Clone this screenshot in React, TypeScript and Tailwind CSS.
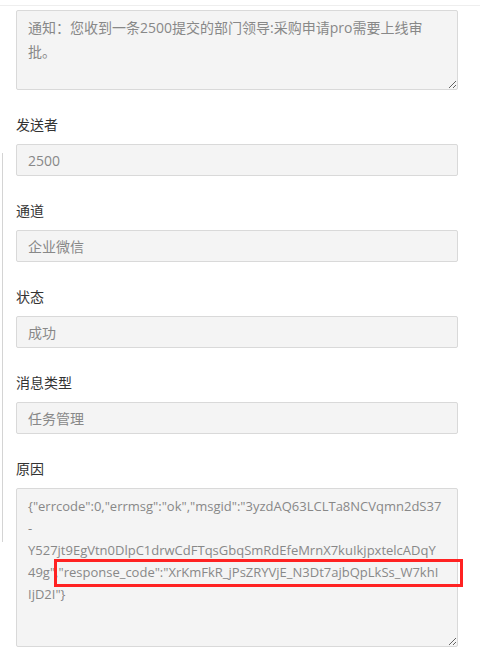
const font = "font-['Open_Sans','Noto_Sans_CJK_SC',sans-serif]";

const fields = [
  { label: "发送者", value: "2500" },
  { label: "通道", value: "企业微信" },
  { label: "状态", value: "成功" },
  { label: "消息类型", value: "任务管理" },
];

const reason = [
  '{"errcode":0,"errmsg":"ok","msgid":"3yzdAQ63LCLTa8NCVqmn2dS37',
  "-",
  "Y527jt9EgVtn0DlpC1drwCdFTqsGbqSmRdEfeMrnX7kuIkjpxtelcADqY",
  '49g","response_code":"XrKmFkR_jPsZRYVjE_N3Dt7ajbQpLkSs_W7khI',
  'IjD2I"}',
].join("\n");

function App() {
  return (
    <div className={`min-h-[670px] w-[480px] bg-white pt-[5px] ${font}`}>
      <div className="border-t border-[#eeeeee]" />
      <div className="flex">
        <div className="ml-[2px] mt-[147px] h-[389px] w-px shrink-0 bg-[#d4d4d4]" />
        <div className="ml-[13px] w-[442px] pt-[4px]">
          <textarea
            readOnly
            value={"通知：您收到一条2500提交的部门领导:采购申请pro需要上线审\n批。"}
            className="mb-[25px] block h-[80px] w-full resize-y overflow-hidden whitespace-pre rounded-[2px] border border-[#d9d9d9] bg-[#f4f4f4] px-[11px] pt-[5px] text-[14px] leading-[24px] text-[#888888] outline-none"
          />

          {fields.map((f) => (
            <div key={f.label} className="mb-[25px]">
              <div className="mb-[9px] text-[14px] leading-[20px] text-[#333333]">
                {f.label}
              </div>
              <div className="flex h-[32px] items-center rounded-[2px] border border-[#d9d9d9] bg-[#f4f4f4] px-[11px] text-[14px] text-[#888888]">
                {f.value}
              </div>
            </div>
          ))}

          <div className="mb-[9px] text-[14px] leading-[20px] text-[#333333]">
            原因
          </div>
          <div className="relative">
            <textarea
              readOnly
              value={reason}
              className="block h-[159px] w-full resize-y overflow-hidden whitespace-pre rounded-[2px] border border-[#d9d9d9] bg-[#f4f4f4] px-[11px] pt-[6px] text-[13px] leading-[22px] text-[#888888] outline-none"
            />
            <div className="pointer-events-none absolute left-[38px] top-[71px] h-[28px] w-[409px] border-[3px] border-[#ff2222]" />
          </div>
        </div>
      </div>
    </div>
  );
}

export default App;
